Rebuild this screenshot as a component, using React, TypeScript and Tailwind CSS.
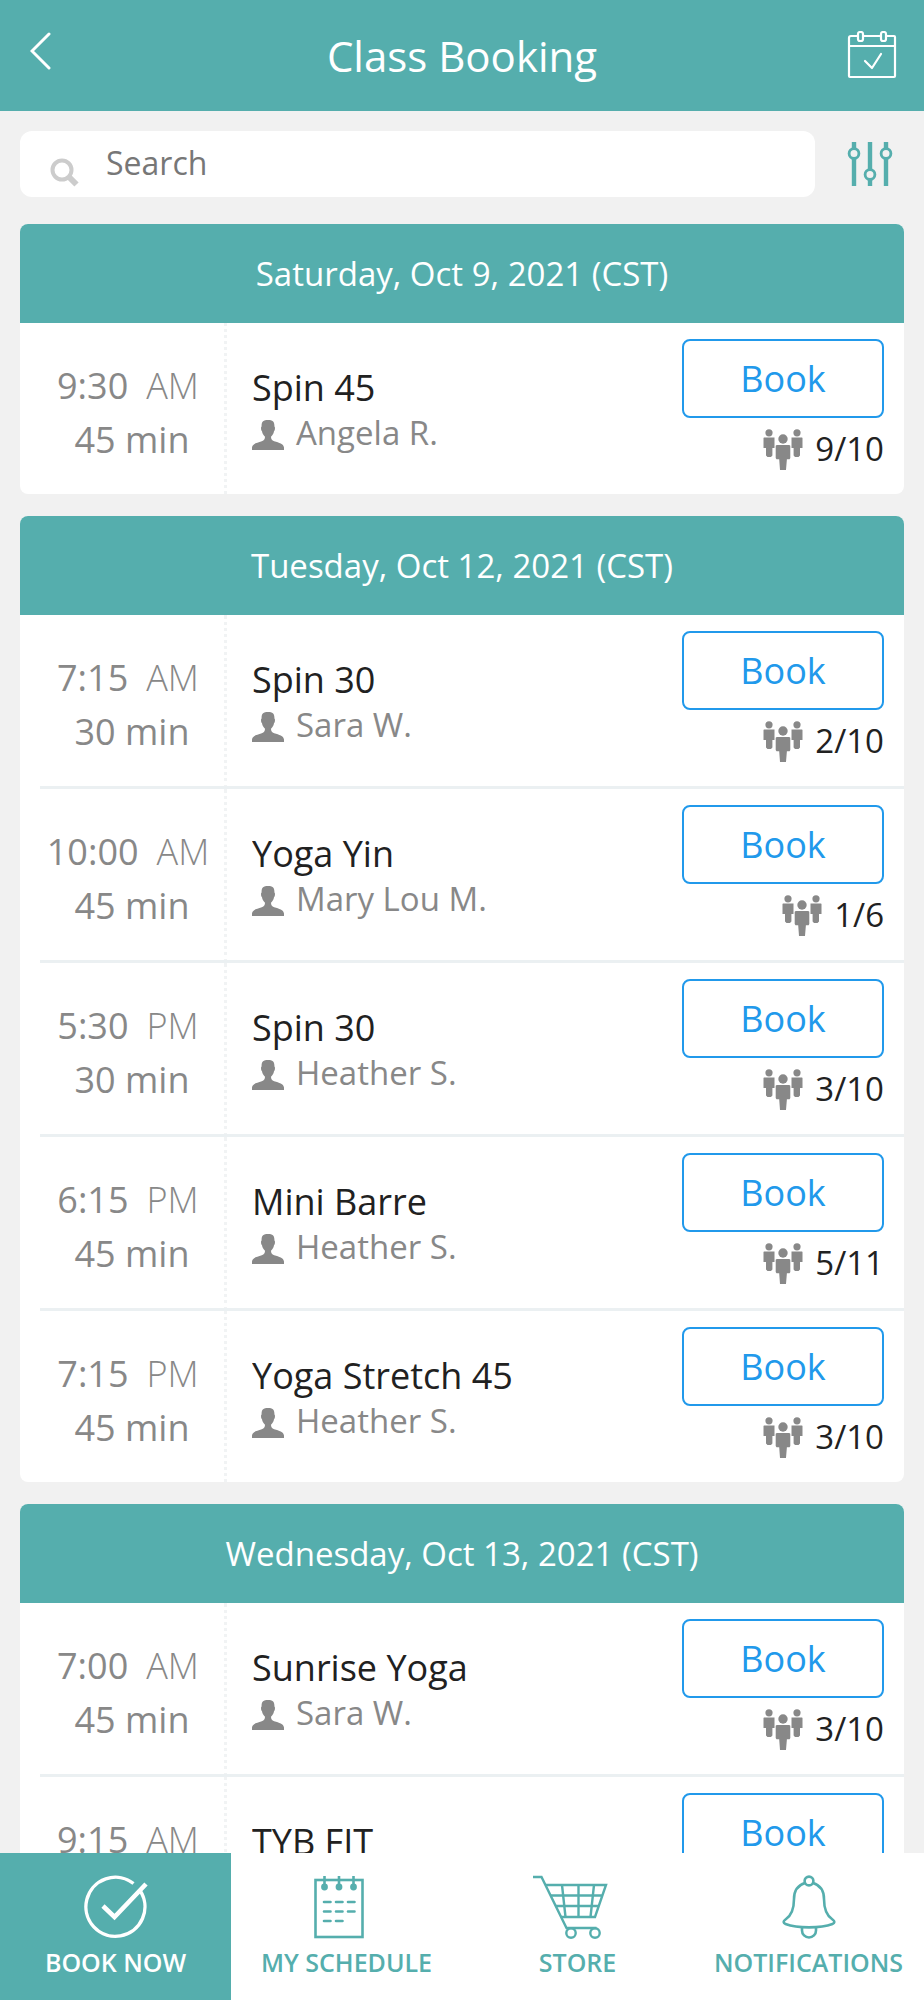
import { useState } from "react";

type ClassItem = {
  time: string;
  period: string;
  length: string;
  name: string;
  coach: string;
  spots: string;
};

type Day = { date: string; classes: ClassItem[] };

const days: Day[] = [
  {
    date: "Saturday, Oct 9, 2021 (CST)",
    classes: [
      { time: "9:30", period: "AM", length: "45 min", name: "Spin 45", coach: "Angela R.", spots: "9/10" },
    ],
  },
  {
    date: "Tuesday, Oct 12, 2021 (CST)",
    classes: [
      { time: "7:15", period: "AM", length: "30 min", name: "Spin 30", coach: "Sara W.", spots: "2/10" },
      { time: "10:00", period: "AM", length: "45 min", name: "Yoga Yin", coach: "Mary Lou M.", spots: "1/6" },
      { time: "5:30", period: "PM", length: "30 min", name: "Spin 30", coach: "Heather S.", spots: "3/10" },
      { time: "6:15", period: "PM", length: "45 min", name: "Mini Barre", coach: "Heather S.", spots: "5/11" },
      { time: "7:15", period: "PM", length: "45 min", name: "Yoga Stretch 45", coach: "Heather S.", spots: "3/10" },
    ],
  },
  {
    date: "Wednesday, Oct 13, 2021 (CST)",
    classes: [
      { time: "7:00", period: "AM", length: "45 min", name: "Sunrise Yoga", coach: "Sara W.", spots: "3/10" },
      { time: "9:15", period: "AM", length: "45 min", name: "TYB FIT", coach: "Sara W.", spots: "4/10" },
    ],
  },
];

function BackIcon() {
  return (
    <svg width="22" height="38" viewBox="0 0 22 38" fill="none" stroke="currentColor" strokeWidth="3" strokeLinecap="round">
      <path d="M19 2 2 19l17 17" />
    </svg>
  );
}

function CalendarCheckIcon() {
  return (
    <svg width="50" height="48" viewBox="0 0 50 48" fill="none" stroke="currentColor" strokeWidth="2.2" strokeLinecap="round" strokeLinejoin="round">
      <path d="M11 5H4a2 2 0 0 0-2 2v38a1 1 0 0 0 1 1h44a1 1 0 0 0 1-1V6a1 1 0 0 0-1-1h-8M16 5h18M2 15h46" />
      <rect x="11" y="1" width="5" height="9" rx="2" />
      <rect x="34" y="1" width="5" height="9" rx="2" />
      <path d="m18 30 7 7 9-14" />
    </svg>
  );
}

function SearchIcon() {
  return (
    <svg width="29" height="29" viewBox="0 0 29 29" fill="none" stroke="currentColor">
      <circle cx="12" cy="12" r="9.5" strokeWidth="4" />
      <path d="m18.5 18.5 8 8" strokeWidth="6" />
    </svg>
  );
}

function FilterIcon() {
  return (
    <svg width="46" height="46" viewBox="0 0 46 46" fill="none" stroke="currentColor">
      <path d="M7 1v6M7 18v27M23 1v27M23 39v6M39 1v6M39 18v27" strokeWidth="4.4" />
      <g strokeWidth="2.8">
        <circle cx="7" cy="12.5" r="4.9" />
        <circle cx="23" cy="33.5" r="4.9" />
        <circle cx="39" cy="12.5" r="4.9" />
      </g>
    </svg>
  );
}

function PersonIcon() {
  return (
    <svg width="32" height="30" viewBox="0 0 32 30" fill="currentColor">
      <path d="M16 0c4.800 0 6.600 1.600 6.400 6.500.9.300.7 3.900-.4 4.800-.4 2.400-1.400 4-3 5.400 0 2.300.8 3.400 3.200 4.600 5 1.600 9.300 2.400 9.800 6.200V30H0v-2.500c.5-3.800 4.800-4.600 9.800-6.200 2.400-1.200 3.200-2.300 3.200-4.600-1.600-1.400-2.600-3-3-5.400-1.100-.9-1.300-4.500-.4-4.800C9.400 1.600 11.200 0 16 0z" />
    </svg>
  );
}

function GroupIcon() {
  return (
    <svg width="40" height="41" viewBox="0 0 40 41" fill="currentColor">
      <circle cx="6" cy="3.8" r="3.6" />
      <path d="M1 8.5h10.500V19H9.400v7.500L8 28H4.500L3 26.500V19H.5V9z" />
      <circle cx="34" cy="3.8" r="3.6" />
      <path d="M28.500 8.500H39l.5.500v10H37v7.500L35.500 28H32l-1.400-1.500V19h-2.100z" />
      <circle cx="20" cy="10" r="4.7" />
      <path d="M13.700 16h12.600l1 .8V29l-.7 1.200h-2.700L23 41h-6l-.8-10.800h-2.700L12.700 29V16.800z" />
    </svg>
  );
}

function BookNowIcon() {
  return (
    <svg width="64" height="64" viewBox="0 0 64 64" fill="none" stroke="currentColor">
      <path d="M49.500 8.500A29.500 29.500 0 1 0 56 15.500" strokeWidth="3.4" />
      <path d="m19 31 11.500 11L62 9" strokeWidth="4.6" />
    </svg>
  );
}

function ScheduleIcon() {
  return (
    <svg width="50" height="64" viewBox="0 0 50 64" fill="none" stroke="currentColor" strokeWidth="2.6">
      <rect x="1.5" y="5" width="47" height="57" />
      <path d="M10.500 1v10M25 1v10M39.500 1v10" />
      <g fill="currentColor" stroke="none">
        <circle cx="10.5" cy="12" r="3.4" />
        <circle cx="25" cy="12" r="3.4" />
        <circle cx="39.5" cy="12" r="3.4" />
      </g>
      <path d="M10 27h6.500M22 27h6.500M34 27h6.500M10 36.500h6.500M22 36.500h6.500M34 36.500h6.500M10 46h6.500M22 46h6.500" strokeLinecap="round" />
    </svg>
  );
}

function StoreIcon() {
  return (
    <svg width="76" height="64" viewBox="0 0 76 64" fill="none" stroke="currentColor" strokeWidth="2.4">
      <path d="M1 2h8.500l25 51h30" />
      <path d="M14 10h60L63 42H29M18.500 20.500h52M23.500 31h43.500" />
      <path d="m30 10 3.500 32M46.500 10v32M62 10l-3.500 32" />
      <circle cx="39" cy="58" r="4.7" />
      <circle cx="63" cy="58" r="4.7" />
    </svg>
  );
}

function BellIcon() {
  return (
    <svg width="54" height="64" viewBox="0 0 54 64" fill="none" stroke="currentColor" strokeWidth="2.6">
      <circle cx="27" cy="6" r="4.4" />
      <path d="M23 8C15 10.500 12 16 12 24c0 9-1.500 16-8.500 20.500C1 46.300 1 48 3.500 49c12 4.500 35 4.500 47 0 2.500-1 2.500-2.700 0-4.500C43.500 40 42 33 42 24c0-8-3-13.500-11-16" />
      <path d="M20 53v2.500a7 7 0 0 0 14 0V53" />
    </svg>
  );
}

const tabs = [
  { label: "BOOK NOW", Icon: BookNowIcon, iconClass: "" },
  { label: "MY SCHEDULE", Icon: ScheduleIcon, iconClass: "mr-4" },
  { label: "STORE", Icon: StoreIcon, iconClass: "mr-4" },
  { label: "NOTIFICATIONS", Icon: BellIcon, iconClass: "" },
];

function ClassRow({ item }: { item: ClassItem }) {
  return (
    <li className="group relative flex h-[174px] last:h-[171px]">
      <div className="flex w-[207px] shrink-0 flex-col items-center border-r-3 border-dotted border-[#f1f3f4] pt-9 pl-5 text-4xl leading-[54px] text-[#888]">
        <p className="flex gap-[18px] pr-2 whitespace-nowrap">
          <span>{item.time}</span>
          <span className="font-light">{item.period}</span>
        </p>
        <p>{item.length}</p>
      </div>
      <div className="min-w-0 grow pt-10 pl-[25px]">
        <h3 className="truncate text-4xl leading-[50px] text-[#212121]">{item.name}</h3>
        <p className="flex items-center gap-3 text-[33px] leading-10 text-[#888]">
          <span className="pt-1">
            <PersonIcon />
          </span>
          {item.coach}
        </p>
      </div>
      <div className="flex shrink-0 flex-col items-end pt-4 pr-5">
        <button type="button" className="h-[79px] w-[202px] rounded-lg border-2 border-[#2199eb] pt-px text-4xl text-[#2199eb]">
          Book
        </button>
        <p className="flex items-center gap-3 pt-[7px] text-[33px] leading-12 text-[#212121]">
          <span className="text-[#888]">
            <GroupIcon />
          </span>
          {item.spots}
        </p>
      </div>
      <span className="absolute right-0 bottom-0 left-5 h-[3px] bg-[#ebf0f2] group-last:hidden" />
    </li>
  );
}

export default function App() {
  const [active, setActive] = useState("BOOK NOW");
  const [query, setQuery] = useState("");

  return (
    <div className="flex h-screen flex-col overflow-hidden bg-[#f1f1f1] font-['Open_Sans',sans-serif]">
      <header className="flex h-[111px] shrink-0 items-center justify-between bg-[#55aead] px-[27px] text-white">
        <button type="button" aria-label="Back" className="w-[50px] pb-2.5 pl-[3px]">
          <BackIcon />
        </button>
        <h1 className="text-[42px]">Class Booking</h1>
        <button type="button" aria-label="My calendar" className="pb-0.5">
          <CalendarCheckIcon />
        </button>
      </header>

      <main className="min-h-0 grow overflow-y-auto px-5 pt-5 [scrollbar-width:none]">
        <div className="mb-[27px] flex items-center gap-8 pr-[11px]">
          <label className="flex h-[66px] grow items-center gap-[27px] rounded-xl bg-white pl-[30px]">
            <span className="pt-4 text-[#ccc]">
              <SearchIcon />
            </span>
            <input
              type="text"
              aria-label="Search"
              placeholder="Search"
              value={query}
              onChange={(e) => setQuery(e.target.value)}
              className="min-w-0 grow pb-0.5 text-[32px] text-[#212121] outline-none placeholder:text-[#777]"
            />
          </label>
          <button type="button" aria-label="Filter" className="text-[#55aead]">
            <FilterIcon />
          </button>
        </div>

        <div className="flex flex-col gap-[22px]">
          {days.map((day) => (
            <section key={day.date} className="shrink-0 overflow-hidden rounded-lg bg-white">
              <h2 className="bg-[#55aead] text-center text-[33px] leading-[99px] text-white">{day.date}</h2>
              <ul>
                {day.classes.map((item) => (
                  <ClassRow key={item.time + item.period} item={item} />
                ))}
              </ul>
            </section>
          ))}
        </div>
      </main>

      <nav className="grid h-[147px] shrink-0 grid-cols-4 bg-white">
        {tabs.map(({ label, Icon, iconClass }) => (
          <button
            key={label}
            type="button"
            onClick={() => setActive(label)}
            className={`flex flex-col items-center gap-[7px] pt-[22px] text-[25px] leading-8 font-semibold ${
              active === label ? "bg-[#55aead] text-white" : "text-[#55aead]"
            }`}
          >
            <span className={iconClass}>
              <Icon />
            </span>
            {label}
          </button>
        ))}
      </nav>
    </div>
  );
}
